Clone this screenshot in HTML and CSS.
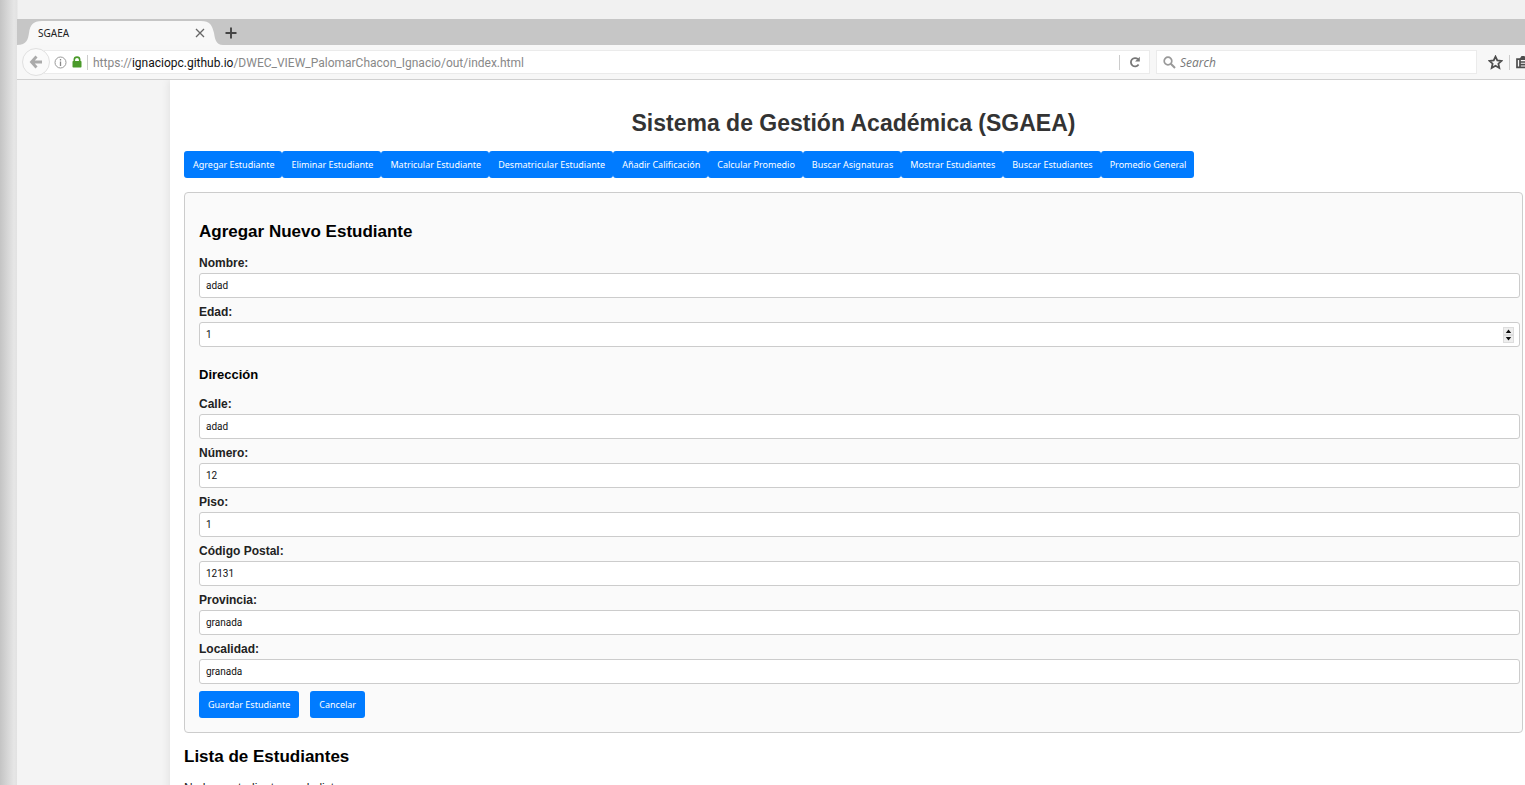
FILE: index.html
```html
<!DOCTYPE html>
<html lang="es">
<head>
<meta charset="utf-8">
<title>SGAEA</title>
<link rel="stylesheet" href="styles.css">
</head>
<body>
<div class="window">
  <div class="tabs">
    <svg class="tab-shape" width="206" height="26" viewBox="0 0 206 26" aria-hidden="true"><path d="M0 26C10 26 11 20 12 14C13 6 16 2 25 2H184C193 2 195 6 197 14C198 20 199 26 206 26Z" fill="#f8f8f8"/></svg>
    <div class="tab">
      <span class="tab-title">SGAEA</span>
      <button class="icon-button" type="button" aria-label="Close tab"><svg width="10" height="10" viewBox="0 0 10 10"><path d="M1 1L9 9M9 1L1 9" stroke="#666" stroke-width="1.3"/></svg></button>
    </div>
    <button class="icon-button" type="button" aria-label="New tab"><svg width="12" height="12" viewBox="0 0 12 12"><path d="M6 .5V11.5M.5 6H11.5" stroke="#444" stroke-width="1.9"/></svg></button>
  </div>
  <div class="toolbar">
    <button class="back" type="button" aria-label="Back"><svg width="14" height="14" viewBox="0 0 14 14"><path d="M7.5 1.5L2.5 7L7.5 12.5M3 7H13" fill="none" stroke="#aaa" stroke-width="2.8"/></svg></button>
    <div class="address">
      <svg width="13" height="13" viewBox="0 0 13 13" aria-hidden="true"><circle cx="6.5" cy="6.5" r="5.5" fill="none" stroke="#999"/><path d="M6.5 5.5V10M6.5 3V4.4" stroke="#888" stroke-width="1.3"/></svg>
      <svg width="10" height="12" viewBox="0 0 10 12" aria-hidden="true"><path d="M2.3 6V3.8a2.7 2.7 0 0 1 5.4 0V6" fill="none" stroke="#4a9a2a" stroke-width="1.6"/><rect x=".5" y="5" width="9" height="6.5" rx=".8" fill="#4a9a2a"/></svg>
      <span class="rule"></span>
      <a class="url" href="#">https://<span class="host">ignaciopc.github.io</span>/DWEC_VIEW_PalomarChacon_Ignacio/out/index.html</a>
      <span class="rule"></span>
      <button class="icon-button reload" type="button" aria-label="Reload"><svg width="12" height="12" viewBox="0 0 12 12"><path d="M9.6 8.6A4.2 4.2 0 1 1 9 3.2" fill="none" stroke="#777" stroke-width="1.8"/><path d="M10.8 .8V5.5H6.1Z" fill="#777"/></svg></button>
    </div>
    <div class="search">
      <svg width="13" height="13" viewBox="0 0 13 13" aria-hidden="true"><circle cx="5" cy="5" r="3.8" fill="none" stroke="#999" stroke-width="1.7"/><path d="M7.8 7.8L12 12" stroke="#999" stroke-width="2"/></svg>
      <input class="search-input" type="text" placeholder="Search" aria-label="Search">
    </div>
    <div class="tools">
      <button class="icon-button" type="button" aria-label="Bookmark"><svg width="15" height="15" viewBox="0 0 15 15"><path d="M7.5 1.6L9.3 5.4L13.5 5.9L10.4 8.7L11.3 13L7.5 10.8L3.7 13L4.6 8.7L1.5 5.9L5.7 5.4Z" fill="none" stroke="#4d4d4d" stroke-width="1.8"/></svg></button>
      <span class="rule"></span>
      <button class="icon-button" type="button" aria-label="Bookmarks list"><svg width="14" height="14" viewBox="0 0 14 14"><path d="M1 4.2H13V12.4H1ZM4 4V12.4M4 7H13M4 9.7H13" fill="none" stroke="#4d4d4d" stroke-width="1.7"/><path d="M3.5 4L5.5 1H8.5L10.5 4" fill="#4d4d4d"/></svg></button>
    </div>
  </div>
  <div class="viewport">
    <main class="page">
      <h1>Sistema de Gestión Académica (SGAEA)</h1>
      <nav class="menu">
        <button class="btn" type="button">Agregar Estudiante</button>
        <button class="btn" type="button">Eliminar Estudiante</button>
        <button class="btn" type="button">Matricular Estudiante</button>
        <button class="btn" type="button">Desmatricular Estudiante</button>
        <button class="btn" type="button">Añadir Calificación</button>
        <button class="btn" type="button">Calcular Promedio</button>
        <button class="btn" type="button">Buscar Asignaturas</button>
        <button class="btn" type="button">Mostrar Estudiantes</button>
        <button class="btn" type="button">Buscar Estudiantes</button>
        <button class="btn" type="button">Promedio General</button>
      </nav>
      <form class="card">
        <h2>Agregar Nuevo Estudiante</h2>
        <label for="nombre">Nombre:</label>
        <input class="field" id="nombre" type="text" value="adad">
        <label for="edad">Edad:</label>
        <div class="number">
          <input class="field" id="edad" type="number" value="1">
          <svg class="spinner" width="11" height="16" viewBox="0 0 11 16" aria-hidden="true"><rect x=".5" y=".5" width="10" height="7" fill="#eee" stroke="#ddd"/><rect x=".5" y="8.5" width="10" height="7" fill="#eee" stroke="#ddd"/><path d="M2.8 6H8.2L5.5 2.5ZM2.8 10H8.2L5.5 13.5Z" fill="#111"/></svg>
        </div>
        <h3>Dirección</h3>
        <label for="calle">Calle:</label>
        <input class="field" id="calle" type="text" value="adad">
        <label for="numero">Número:</label>
        <input class="field" id="numero" type="text" value="12">
        <label for="piso">Piso:</label>
        <input class="field" id="piso" type="text" value="1">
        <label for="cp">Código Postal:</label>
        <input class="field" id="cp" type="text" value="12131">
        <label for="provincia">Provincia:</label>
        <input class="field" id="provincia" type="text" value="granada">
        <label for="localidad">Localidad:</label>
        <input class="field" id="localidad" type="text" value="granada">
        <div class="actions">
          <button class="btn" type="button">Guardar Estudiante</button>
          <button class="btn" type="button">Cancelar</button>
        </div>
      </form>
      <h2 class="list-title">Lista de Estudiantes</h2>
      <p>No hay estudiantes en la lista.</p>
    </main>
  </div>
</div>
</body>
</html>
```
FILE: styles.css
```css
* { box-sizing: border-box; }
body {
  margin: 0;
  height: 100vh;
  overflow: hidden;
  padding: 19px 0 0 17px;
  background: linear-gradient(to right, #c4c4c4, #e6e6e6 14px, #e2e2e2 17px, #f1f1f1 18px);
  font-family: "Liberation Sans", Arial, sans-serif;
}
.window { display: flex; flex-direction: column; height: 100%; background: #f4f4f4; }
button { font-family: inherit; cursor: pointer; }
svg { display: block; flex: none; }
.icon-button { display: flex; padding: 0; border: 0; background: none; }
.tabs { position: relative; display: flex; align-items: center; gap: 20px; flex: none; height: 26px; padding: 2px 0 0 21px; background: #c6c6c6; }
.tab-shape { position: absolute; left: 0; top: 0; }
.tab { position: relative; display: flex; align-items: center; justify-content: space-between; width: 167px; font: 10px "Noto Sans", sans-serif; color: #222; }
.toolbar { display: flex; align-items: center; flex: none; height: 35px; padding-left: 5px; background: #f7f7f7; border-bottom: 1px solid #d0d0d0; overflow: hidden; }
.back { position: relative; display: flex; align-items: center; justify-content: center; flex: none; width: 28px; height: 28px; padding: 0; border: 1px solid #e0e0e0; border-radius: 50%; background: #fafafa; }
.address, .search { display: flex; align-items: center; height: 24px; background: #fff; border: 1px solid #ebebeb; }
.address { flex: 1; gap: 5px; margin: 0 6px 0 -6px; padding: 0 8px 0 9px; }
.rule { flex: none; width: 1px; height: 15px; background: #ccc; }
.url { flex: 1; padding-top: 2px; font: 12px Roboto, sans-serif; color: #888; text-decoration: none; white-space: nowrap; }
.host { color: #111; }
.reload { margin-left: 4px; }
.search { flex: none; gap: 4px; width: 321px; padding: 0 6px; }
.search-input { flex: 1; min-width: 0; padding: 0; border: 0; outline: 0; background: none; font: italic 12px "Open Sans", sans-serif; }
.search-input::placeholder { color: #777; }
.tools { display: flex; align-items: center; gap: 6px; flex: none; width: 48px; padding-left: 11px; }
.viewport { flex: 1; min-height: 0; overflow: hidden; padding-left: 153px; }
.page { min-height: 100%; padding: 29px 2px 20px 14px; background: #fff; box-shadow: 0 0 9px rgba(0, 0, 0, .1); font-size: 12px; }
h1 { margin: 0 0 14px; font-size: 23px; line-height: 28px; text-align: center; color: #333; }
.menu { display: flex; margin-bottom: 14px; }
.btn { height: 27px; padding: 0 9px; border: 0; border-radius: 3px; background: #007bff; color: #fff; font: 9px "Noto Sans", sans-serif; white-space: nowrap; }
.menu .btn { padding-right: 8px; }
.card { display: flex; flex-direction: column; padding: 28px 2px 14px 14px; border: 1px solid #ccc; border-radius: 4px; background: #fafafa; }
h2 { margin: 0 0 12px; font-size: 17px; line-height: 22px; color: #000; }
label { margin-bottom: 2px; font-size: 12px; font-weight: bold; line-height: 16px; color: #222; }
.field { display: block; width: 100%; height: 25px; margin-bottom: 6px; padding: 0 6px; border: 1px solid #ccc; border-radius: 3px; background: #fff; color: #111; font: 10px Roboto, sans-serif; }
.number { position: relative; }
.number .field { appearance: textfield; }
.spinner { position: absolute; right: 6px; top: 5px; }
h3 { margin: 13px 0 12px; font-size: 13px; line-height: 18px; color: #000; }
.actions { display: flex; gap: 11px; margin-top: 1px; }
.list-title { margin: 13px 0 12px; }
p { margin: 0; line-height: 16px; color: #222; }
```
